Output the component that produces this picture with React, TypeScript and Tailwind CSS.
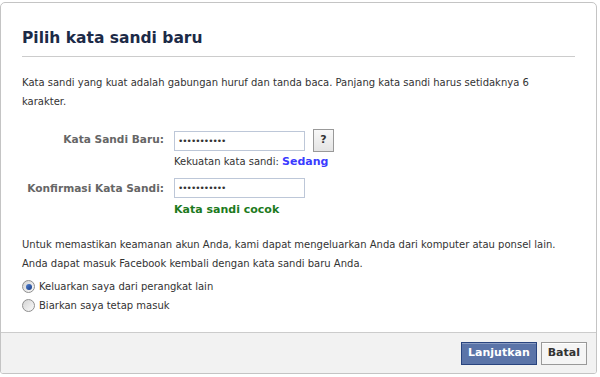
import { useState } from "react";

function Radio({ checked, label, onSelect }: { checked: boolean; label: string; onSelect: () => void }) {
  return (
    <label className="flex items-center gap-[4px] h-[19px] cursor-pointer">
      <input type="radio" name="logout" checked={checked} onChange={onSelect} className="sr-only" />
      <span className="w-[13px] h-[13px] rounded-full border border-[#8f8f8f] bg-gradient-to-br from-[#d4d4d4] to-[#fafafa] flex items-center justify-center">
        {checked && <span className="w-[6px] h-[6px] rounded-full bg-gradient-to-br from-[#4f7fd0] to-[#1c3f86]" />}
      </span>
      {label}
    </label>
  );
}

export default function App() {
  const [logout, setLogout] = useState(true);

  return (
    <div className="w-[600px] h-[377px] bg-white font-['DejaVu_Sans',sans-serif] text-[10px] text-[#333]">
      <div className="ml-0 mr-[3px] pt-[2px] h-[374px]">
        <div className="h-full flex flex-col border border-[#c4c4c4] rounded-t-[5px] rounded-b-[3px] overflow-hidden">
          <div className="flex-1 px-[21px]">
            <h2 className="pt-[25px] pb-[8px] border-b border-[#ccc] text-[15.5px] font-bold text-[#1c2a47] leading-[20px]">
              Pilih kata sandi baru
            </h2>

            <p className="mt-[16px] leading-[19px] pr-[10px]">
              Kata sandi yang kuat adalah gabungan huruf dan tanda baca. Panjang kata sandi harus setidaknya 6 karakter.
            </p>

            <div className="mt-[18px] grid grid-cols-[142px_1fr] gap-x-[10px]">
              <label className="text-right font-bold text-[#666] text-[10.6px] pt-[3px]">Kata Sandi Baru:</label>
              <div>
                <div className="flex items-center gap-[8px]">
                  <input
                    type="password"
                    defaultValue="abcdefghijk"
                    className="w-[131px] h-[20px] border border-[#bdc7d8] px-[3px] text-[9px] tracking-[-1px] outline-none"
                  />
                  <button className="w-[21px] h-[23px] border border-[#999] bg-gradient-to-b from-[#f8f8f8] to-[#e4e4e4] font-bold text-[#333] text-[11px]">
                    ?
                  </button>
                </div>
                <div className="mt-[2px] leading-[15px]">
                  Kekuatan kata sandi: <span className="font-bold text-[#3b3bff] text-[11px]">Sedang</span>
                </div>
              </div>

              <label className="text-right font-bold text-[#666] text-[10.6px] pt-[3px] mt-[9px]">Konfirmasi Kata Sandi:</label>
              <div className="mt-[9px]">
                <input
                  type="password"
                  defaultValue="abcdefghijk"
                  className="w-[131px] h-[20px] border border-[#bdc7d8] px-[3px] text-[9px] tracking-[-1px] outline-none"
                />
                <div className="mt-[4px] font-bold text-[#1d7a1d] text-[11px] leading-[15px]">Kata sandi cocok</div>
              </div>
            </div>

            <p className="mt-[18px] leading-[19px]">
              Untuk memastikan keamanan akun Anda, kami dapat mengeluarkan Anda dari komputer atau ponsel lain.
              <br />
              Anda dapat masuk Facebook kembali dengan kata sandi baru Anda.
            </p>

            <div className="mt-[4px] flex flex-col">
              <Radio checked={logout} label="Keluarkan saya dari perangkat lain" onSelect={() => setLogout(true)} />
              <Radio checked={!logout} label="Biarkan saya tetap masuk" onSelect={() => setLogout(false)} />
            </div>
          </div>

          <div className="h-[41px] border-t border-[#ccc] bg-[#f2f2f2] flex items-center justify-end gap-[4px] pr-[9px]">
            <button className="h-[23px] px-[6px] border border-[#29447e] bg-[#5b74a8] text-white font-bold text-[11px] shadow-[inset_0_1px_0_#8a9cc2]">
              Lanjutkan
            </button>
            <button className="h-[23px] px-[6px] border border-[#999] bg-[#f5f5f5] text-[#333] font-bold text-[11px] shadow-[inset_0_1px_0_#fff]">
              Batal
            </button>
          </div>
        </div>
      </div>
    </div>
  );
}
